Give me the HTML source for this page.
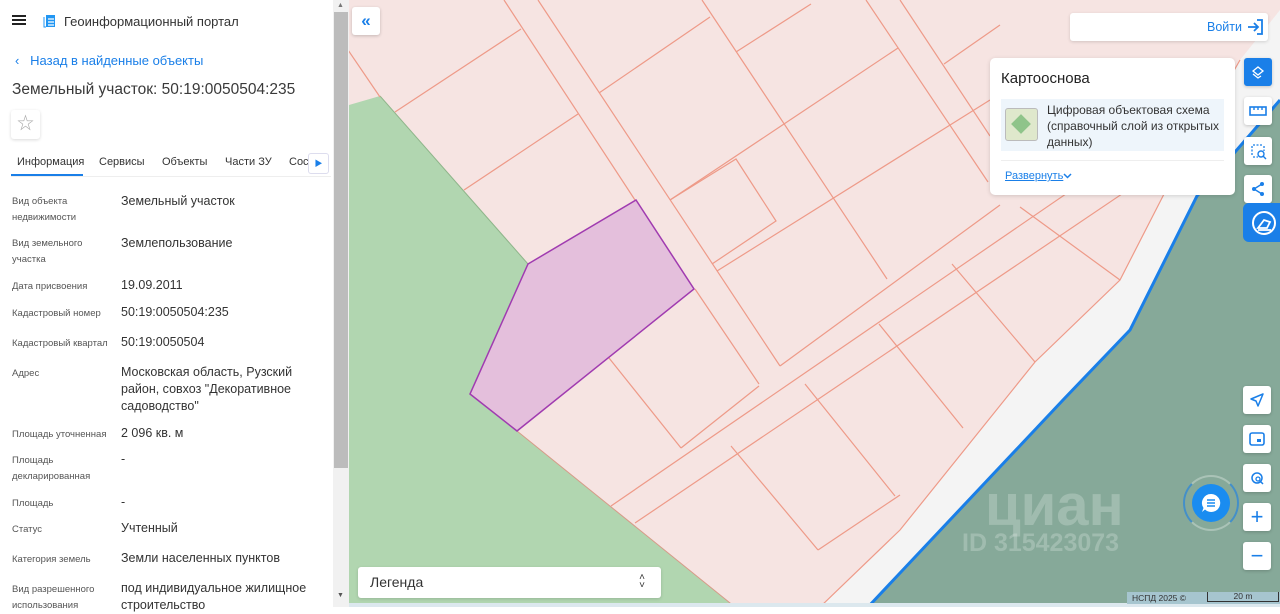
<!DOCTYPE html>
<html><head><meta charset="utf-8"><style>
*{margin:0;padding:0;box-sizing:border-box}
body{width:1280px;height:607px;overflow:hidden;font-family:"Liberation Sans","Noto Sans CJK SC",sans-serif;background:#fff;position:relative}
.lp{position:absolute;left:0;top:0;width:333px;height:607px;background:#fff;color:#333}
.sb{position:absolute;left:333px;top:0;width:16px;height:607px;background:#f1f1f1}
.sb .th{position:absolute;left:1px;top:12px;width:14px;height:456px;background:#bcbcbc}
.map{position:absolute;left:349px;top:0;width:931px;height:607px;overflow:hidden}
.row{position:absolute;left:12px;font-size:9.5px;color:#555;line-height:16px}
.val{position:absolute;left:121px;font-size:12.5px;color:#333;line-height:17px}
.btn{position:absolute;width:28px;height:28px;background:#fff;border-radius:3px;box-shadow:0 1px 3px rgba(0,0,0,.2);display:flex;align-items:center;justify-content:center}
</style></head><body>
<div class="lp">
  <div style="position:absolute;left:12px;top:15px;width:14px;height:2px;background:#222;box-shadow:0 4px 0 #222,0 8px 0 #222"></div>
  <svg style="position:absolute;left:43px;top:13px" width="14" height="16" viewBox="0 0 14 16"><path d="M3 2h9v12H3z" fill="#2196f3"/><path d="M5 6h6M5 9h6M5 12h6" stroke="#fff" stroke-width="1.2"/><path d="M1 4v10h2" stroke="#2196f3" fill="none"/></svg>
  <div style="position:absolute;left:64px;top:14px;font-size:13px;color:#333">Геоинформационный портал</div>
  <div style="position:absolute;left:15px;top:53px;font-size:13px;color:#1a7fe8">‹&nbsp;&nbsp;&nbsp;Назад в найденные объекты</div>
  <div style="position:absolute;left:12px;top:81px;font-size:15.5px;color:#3a3a3a">Земельный участок: 50:19:0050504:235</div>
  <div style="position:absolute;left:11px;top:110px;width:29px;height:29px;border-radius:3px;box-shadow:0 1px 3px rgba(0,0,0,.15);color:#aaa;font-size:17px;text-align:center;line-height:28px">☆</div>
  <div style="position:absolute;left:17px;top:156px;font-size:11px;color:#333">Информация</div>
  <div style="position:absolute;left:11px;top:174px;width:72px;height:2px;background:#1a7fe8"></div>
  <div style="position:absolute;left:11px;top:176px;width:320px;height:1px;background:#eee"></div>
  <div style="position:absolute;left:99px;top:156px;font-size:11px;color:#333">Сервисы</div>
  <div style="position:absolute;left:162px;top:156px;font-size:11px;color:#333">Объекты</div>
  <div style="position:absolute;left:225px;top:156px;font-size:11px;color:#333">Части ЗУ</div>
  <div style="position:absolute;left:289px;top:156px;font-size:11px;color:#333">Сос</div>
  <div style="position:absolute;left:308px;top:153px;width:21px;height:21px;background:#fff;border:1px solid #dde;border-radius:3px;color:#1a7fe8;font-size:8px;text-align:center;line-height:19px">▶</div>
  <div class="row" style="top:194px">Вид объекта<br>недвижимости</div><div class="val" style="top:193px">Земельный участок</div>
  <div class="row" style="top:236px">Вид земельного<br>участка</div><div class="val" style="top:235px">Землепользование</div>
  <div class="row" style="top:279px">Дата присвоения</div><div class="val" style="top:277px">19.09.2011</div>
  <div class="row" style="top:306px">Кадастровый номер</div><div class="val" style="top:304px">50:19:0050504:235</div>
  <div class="row" style="top:336px">Кадастровый квартал</div><div class="val" style="top:334px">50:19:0050504</div>
  <div class="row" style="top:366px">Адрес</div><div class="val" style="top:364px;width:200px">Московская область, Рузский район, совхоз "Декоративное садоводство"</div>
  <div class="row" style="top:427px">Площадь уточненная</div><div class="val" style="top:425px">2 096 кв. м</div>
  <div class="row" style="top:453px">Площадь<br>декларированная</div><div class="val" style="top:451px">-</div>
  <div class="row" style="top:496px">Площадь</div><div class="val" style="top:494px">-</div>
  <div class="row" style="top:522px">Статус</div><div class="val" style="top:520px">Учтенный</div>
  <div class="row" style="top:552px">Категория земель</div><div class="val" style="top:550px">Земли населенных пунктов</div>
  <div class="row" style="top:582px">Вид разрешенного<br>использования</div><div class="val" style="top:580px">под индивидуальное жилищное<br>строительство</div>
</div>
<div class="sb"><div class="th"></div><div style="position:absolute;left:4px;top:2px;font-size:7px;color:#777">▲</div><div style="position:absolute;left:4px;top:592px;font-size:7px;color:#555">▼</div></div>
<div class="map">
<svg width="931" height="607" viewBox="349 0 931 607" style="position:absolute;left:0;top:0">
  <rect x="349" y="0" width="931" height="607" fill="#f6e4e2"/>
  <polygon points="349,105 380,96 528,264 470,394 517,431 735,607 349,607" fill="#b1d6b0"/>
  <polyline points="380,96 528,264" stroke="#8fb58a" fill="none"/>
  <polyline points="517,431 735,607" stroke="#d79a88" fill="none"/>
  <polygon points="820,607 900,530 1035,362 1120,280 1163,196 1240,60 1280,10 1280,607" fill="#f4f4f4"/>
  <polygon points="868,607 900,573 1063,400 1130,330 1197,196 1280,100 1280,607" fill="#86a999"/>
  <polyline points="868,607 900,573 1063,400 1130,330 1197,196 1280,100" stroke="#1a7fe8" stroke-width="3" fill="none"/>
  <g stroke="#ee9a88" stroke-width="1.2" fill="none">
    <line x1="504" y1="0" x2="635" y2="200"/>
    <line x1="695" y1="289" x2="759" y2="384"/>
    <line x1="538" y1="0" x2="780" y2="366"/>
    <line x1="702" y1="0" x2="887" y2="279"/>
    <line x1="866" y1="0" x2="988" y2="182"/>
    <line x1="900" y1="0" x2="990" y2="136"/>
    <line x1="348" y1="50" x2="380" y2="97"/>
    <line x1="395" y1="112" x2="521" y2="29"/>
    <line x1="464" y1="190" x2="578" y2="114"/>
    <line x1="599" y1="93" x2="710" y2="17"/>
    <line x1="736" y1="52" x2="811" y2="4"/>
    <line x1="670" y1="200" x2="898" y2="48"/>
    <polyline points="670,200 736,159 776,221 712,264"/>
    <line x1="717" y1="271" x2="990" y2="100"/>
    <line x1="944" y1="64" x2="1000" y2="25"/>
    <line x1="780" y1="366" x2="1000" y2="205"/>
    <line x1="611" y1="506" x2="1130" y2="150"/>
    <line x1="635" y1="523" x2="1150" y2="175"/>
    <line x1="609" y1="358" x2="681" y2="448"/>
    <line x1="681" y1="448" x2="759" y2="386"/>
    <line x1="952" y1="264" x2="1035" y2="362"/>
    <line x1="879" y1="324" x2="963" y2="428"/>
    <line x1="805" y1="384" x2="895" y2="496"/>
    <line x1="731" y1="446" x2="818" y2="550"/>
    <line x1="818" y1="550" x2="900" y2="495"/>
    <line x1="1020" y1="207" x2="1120" y2="280"/>
    <polyline points="820,607 900,530 1035,362 1120,280 1163,196 1240,60"/>
  </g>
  <polygon points="528,264 636,200 694,289 517,431 470,394" fill="#e4bfdc" stroke="#a03bb0" stroke-width="1.5"/>
  <text x="985" y="525" font-family="Liberation Sans" font-size="58" font-weight="bold" fill="#fff" fill-opacity=".22">циан</text>
  <text x="962" y="551" font-family="Liberation Sans" font-size="25" font-weight="bold" fill="#fff" fill-opacity=".22">ID 315423073</text>
</svg>
</div>
<div class="btn" style="left:352px;top:7px;color:#1a7fe8;font-size:17px;font-weight:bold">«</div>
<div style="position:absolute;left:1070px;top:13px;width:198px;height:28px;background:#fff;border-radius:3px;box-shadow:0 1px 3px rgba(0,0,0,.15);font-size:12.5px;color:#1a7fe8;text-align:right;padding:7px 26px 0 0">Войти</div>
<svg style="position:absolute;left:1246px;top:19px" width="18" height="16" viewBox="0 0 18 16"><path d="M11 1h5v14h-5M2 8h10M8 4l4 4-4 4" stroke="#1a7fe8" stroke-width="1.8" fill="none"/></svg>
<div style="position:absolute;left:990px;top:58px;width:245px;height:137px;background:#fff;border-radius:5px;box-shadow:0 1px 4px rgba(0,0,0,.15)">
  <div style="position:absolute;left:11px;top:12px;font-size:15px;color:#222">Картооснова</div>
  <div style="position:absolute;left:11px;top:41px;width:223px;height:52px;background:#eef5fb"></div>
  <div style="position:absolute;left:15px;top:50px;width:33px;height:33px;background:#dfe8cc;border:1px solid #bbb;border-radius:3px"><div style="position:absolute;left:8px;top:8px;width:14px;height:14px;background:#8fc48a;transform:rotate(45deg)"></div></div>
  <div style="position:absolute;left:57px;top:44px;font-size:12px;line-height:16px;color:#333">Цифровая объектовая схема<br>(справочный слой из открытых<br>данных)</div>
  <div style="position:absolute;left:11px;top:102px;width:223px;height:1px;background:#eee"></div>
  <div style="position:absolute;left:15px;top:112px;font-size:11px;color:#1a7fe8;text-decoration:underline">Развернуть</div>
  <svg style="position:absolute;left:73px;top:115px" width="9" height="6" viewBox="0 0 9 6"><path d="M1 1l3.5 3.5L8 1" stroke="#1a7fe8" stroke-width="1.5" fill="none"/></svg>
</div>
<div class="btn" style="left:1244px;top:58px;background:#1a7fe8"><svg width="16" height="16" viewBox="0 0 16 16"><path d="M3 7l5-4 5 4-5 4z M3 10l5 4 3-2" stroke="#fff" stroke-width="1.3" fill="none"/></svg></div>
<div class="btn" style="left:1244px;top:97px"><svg width="18" height="10" viewBox="0 0 18 10"><rect x="1" y="1" width="16" height="8" stroke="#1a7fe8" stroke-width="1.6" fill="none"/><path d="M5 1v3M9 1v3M13 1v3" stroke="#1a7fe8" stroke-width="1.4"/></svg></div>
<div class="btn" style="left:1244px;top:137px"><svg width="18" height="18" viewBox="0 0 18 18"><path d="M4 3h10M3 4v10M15 4v5M4 15h5" stroke="#1a7fe8" stroke-width="1.3" stroke-dasharray="2 1.5" fill="none"/><circle cx="12" cy="12" r="3" stroke="#1a7fe8" stroke-width="1.4" fill="none"/><path d="M14 14l3 3" stroke="#1a7fe8" stroke-width="1.4"/></svg></div>
<div class="btn" style="left:1244px;top:175px"><svg width="16" height="16" viewBox="0 0 16 16"><circle cx="12" cy="3" r="2" fill="#1a7fe8"/><circle cx="4" cy="8" r="2" fill="#1a7fe8"/><circle cx="12" cy="13" r="2" fill="#1a7fe8"/><path d="M12 3L4 8l8 5" stroke="#1a7fe8" stroke-width="1.4" fill="none"/></svg></div>
<div style="position:absolute;left:1243px;top:203px;width:40px;height:39px;background:#1a7fe8;border-radius:6px 0 0 6px"><svg style="position:absolute;left:7px;top:6px" width="28" height="28" viewBox="0 0 28 28"><circle cx="14" cy="14" r="11" stroke="#fff" stroke-width="2" fill="none"/><path d="M8 19l6-8 6 2-3 6z M8 21h13" stroke="#fff" stroke-width="1.8" fill="none"/></svg></div>
<div class="btn" style="left:1243px;top:386px"><svg width="14" height="14" viewBox="0 0 14 14"><path d="M13 1L1 6l5 2 2 5z" stroke="#1a7fe8" stroke-width="1.5" fill="none" stroke-linejoin="round"/></svg></div>
<div class="btn" style="left:1243px;top:425px"><svg width="16" height="14" viewBox="0 0 16 14"><rect x="1" y="1" width="14" height="12" rx="2" stroke="#1a7fe8" stroke-width="1.6" fill="none"/><rect x="8" y="7" width="4" height="3" fill="#1a7fe8"/></svg></div>
<div class="btn" style="left:1243px;top:464px"><svg width="14" height="14" viewBox="0 0 14 14"><circle cx="7" cy="7" r="5" stroke="#1a7fe8" stroke-width="1.5" fill="none"/><circle cx="8" cy="8" r="2" stroke="#1a7fe8" stroke-width="1.3" fill="#fff"/><path d="M10 10l3 3" stroke="#1a7fe8" stroke-width="1.5"/></svg></div>
<div class="btn" style="left:1243px;top:503px;color:#1a7fe8;font-size:22px">+</div>
<div class="btn" style="left:1243px;top:542px;color:#1a7fe8;font-size:22px">−</div>
<div style="position:absolute;left:1183px;top:475px;width:56px;height:56px;border-radius:50%;border:2px solid rgba(26,127,232,.6);border-top-color:rgba(255,255,255,.3);border-bottom-color:rgba(255,255,255,.3)"></div>
<div style="position:absolute;left:1192px;top:484px;width:38px;height:38px;border-radius:50%;background:#1a8cf0"><svg style="position:absolute;left:9px;top:9px" width="20" height="20" viewBox="0 0 20 20"><path d="M10 1a9 9 0 1 1-6 15.5L1 19l1.5-4A9 9 0 0 1 10 1z" fill="#fff"/><path d="M6 7h8M6 10h8M6 13h8" stroke="#1a8cf0" stroke-width="1.5"/></svg></div>
<div style="position:absolute;left:358px;top:567px;width:303px;height:31px;background:#fff;border-radius:3px;box-shadow:0 1px 3px rgba(0,0,0,.15);font-size:14px;color:#333;padding:7px 0 0 12px">Легенда<span style="position:absolute;right:16px;top:7px;font-size:10px;line-height:8px;color:#333">˄<br>˅</span></div>
<div style="position:absolute;left:349px;top:603px;width:931px;height:4px;background:#dce8ee"></div>
<div style="position:absolute;left:1127px;top:592px;width:153px;height:12px;background:#a6c5cf;font-size:8.5px;color:#333;padding-left:5px;line-height:12px">НСПД 2025 ©<span style="position:absolute;left:80px;top:0;width:72px;height:10px;border:1px solid #333;border-top:none;text-align:center;line-height:9px">20 m</span></div>
</body></html>
